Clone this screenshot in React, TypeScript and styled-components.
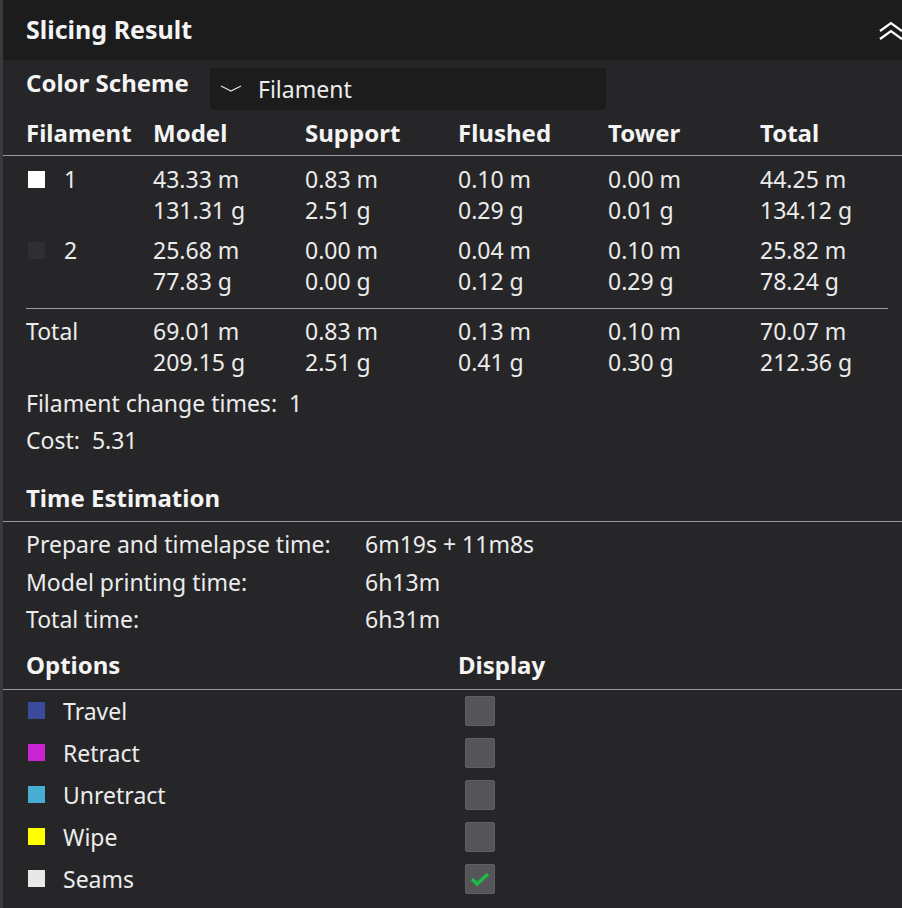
import React from "react";
import styled, { createGlobalStyle } from "styled-components";

const Global = createGlobalStyle`
  html, body { margin: 0; padding: 0; background: #262628; }
  body { font-family: "Noto Sans", "Open Sans", sans-serif; color: #ececec; }
  * { box-sizing: border-box; }
`;

const Panel = styled.div`
  width: 902px;
  height: 908px;
  background: #262628;
  border-left: 3px solid #3a3a3c;
  overflow: hidden;
  font-size: 23px;
`;

const TitleBar = styled.div`
  height: 60px;
  background: #1c1c1d;
  display: flex;
  align-items: center;
  justify-content: space-between;
  padding-left: 23px;
`;

const Title = styled.div`
  font-weight: 700;
  font-size: 25px;
  color: #f4f4f4;
  margin-top: -2px;
`;

const SchemeRow = styled.div`
  display: flex;
  align-items: flex-start;
  padding: 8px 0 0 23px;
  gap: 17px;
`;

const SectionLabel = styled.div`
  font-weight: 700;
  font-size: 24px;
  color: #f4f4f4;
`;

const SchemeLabel = styled(SectionLabel)`
  line-height: 30px;
  min-width: 167px;
  white-space: nowrap;
`;

const Dropdown = styled.div`
  width: 396px;
  height: 42px;
  background: #1c1c1d;
  border-radius: 3px;
  display: flex;
  align-items: center;
  padding-left: 10px;
  gap: 16px;
  font-size: 23px;
`;

const Table = styled.div`
  display: grid;
  grid-template-columns: 127px 152px 153px 150px 152px 1fr;
  padding-left: 23px;
`;

const HeadCell = styled.div`
  font-weight: 700;
  font-size: 24px;
  color: #f4f4f4;
  line-height: 38px;
  padding-top: 4px;
  padding-bottom: 3px;
  white-space: nowrap;
`;

const Rule = styled.div<{ $inset?: boolean }>`
  height: 1px;
  background: #9a9a9c;
  margin-left: ${(p) => (p.$inset ? "23px" : "0")};
  margin-right: ${(p) => (p.$inset ? "14px" : "0")};
`;

const Spacer = styled.div<{ $h: number }>`
  height: ${(p) => p.$h}px;
`;

const DataRow = styled.div<{ $top: number }>`
  display: grid;
  grid-template-columns: 127px 152px 153px 150px 152px 1fr;
  padding-left: 23px;
  padding-top: ${(p) => p.$top}px;
  line-height: 31px;
`;

const Cell = styled.div`
  white-space: nowrap;
`;

const FilCell = styled.div`
  display: flex;
  align-items: center;
  height: 31px;
  gap: 19px;
`;

const Swatch = styled.span<{ $c: string }>`
  display: inline-block;
  width: 17px;
  height: 17px;
  background: ${(p) => p.$c};
  margin-left: 2px;
  flex: none;
`;

const InfoLine = styled.div`
  padding-left: 23px;
  line-height: 37px;
  white-space: pre;
`;

const SectionHead = styled.div<{ $top: number }>`
  padding: ${(p) => p.$top}px 0 0 23px;
  line-height: 38px;
  display: grid;
  grid-template-columns: 432px 1fr;
`;

const TimeRow = styled.div`
  display: grid;
  grid-template-columns: 339px 1fr;
  padding-left: 23px;
  line-height: 37.5px;
`;

const OptRow = styled.div`
  display: grid;
  grid-template-columns: 432px 1fr;
  padding-left: 23px;
  height: 42px;
  align-items: center;
`;

const OptLabel = styled.div`
  display: flex;
  align-items: center;
  gap: 18px;
`;

const Check = styled.div`
  width: 30px;
  height: 30px;
  margin-left: 7px;
  background: #555557;
  border: 1px solid #606062;
  border-radius: 2px;
  display: flex;
  align-items: center;
  justify-content: center;
`;

const filaments = [
  {
    id: "1",
    color: "#ffffff",
    vals: [
      ["43.33 m", "131.31 g"],
      ["0.83 m", "2.51 g"],
      ["0.10 m", "0.29 g"],
      ["0.00 m", "0.01 g"],
      ["44.25 m", "134.12 g"],
    ],
  },
  {
    id: "2",
    color: "#2f2f31",
    vals: [
      ["25.68 m", "77.83 g"],
      ["0.00 m", "0.00 g"],
      ["0.04 m", "0.12 g"],
      ["0.10 m", "0.29 g"],
      ["25.82 m", "78.24 g"],
    ],
  },
];

const totals = [
  ["69.01 m", "209.15 g"],
  ["0.83 m", "2.51 g"],
  ["0.13 m", "0.41 g"],
  ["0.10 m", "0.30 g"],
  ["70.07 m", "212.36 g"],
];

const options = [
  { name: "Travel", color: "#3a4b9c", on: false },
  { name: "Retract", color: "#c824d2", on: false },
  { name: "Unretract", color: "#45aed2", on: false },
  { name: "Wipe", color: "#ffff00", on: false },
  { name: "Seams", color: "#e8e8e8", on: true },
];

const Vals = ({ v }: { v: string[] }) => (
  <Cell>
    {v[0]}
    <br />
    {v[1]}
  </Cell>
);

export default function App() {
  return (
    <>
      <Global />
      <Panel>
        <TitleBar>
          <Title>Slicing Result</Title>
          <svg width="26" height="22" viewBox="0 0 26 22" style={{ marginRight: -2, marginTop: 4 }}>
            <polyline points="2,10 13,2 24,10" fill="none" stroke="#fff" strokeWidth="2.2" />
            <polyline points="2,18 13,10 24,18" fill="none" stroke="#fff" strokeWidth="2.2" />
          </svg>
        </TitleBar>
        <SchemeRow>
          <SchemeLabel>Color Scheme</SchemeLabel>
          <Dropdown>
            <svg width="22" height="12" viewBox="0 0 22 12">
              <polyline points="1,3 11,8 21,3" fill="none" stroke="#e0e0e0" strokeWidth="1.2" />
            </svg>
            <span>Filament</span>
          </Dropdown>
        </SchemeRow>
        <Table>
          {["Filament", "Model", "Support", "Flushed", "Tower", "Total"].map((h) => (
            <HeadCell key={h}>{h}</HeadCell>
          ))}
        </Table>
        <Rule />
        {filaments.map((f, i) => (
          <DataRow key={f.id} $top={i === 0 ? 8 : 9}>
            <FilCell>
              <Swatch $c={f.color} />
              <span>{f.id}</span>
            </FilCell>
            {f.vals.map((v, j) => (
              <Vals key={j} v={v} />
            ))}
          </DataRow>
        ))}
        <Spacer $h={11} />
        <Rule $inset />
        <DataRow $top={7}>
          <Cell>Total</Cell>
          {totals.map((v, j) => (
            <Vals key={j} v={v} />
          ))}
        </DataRow>
        <Spacer $h={7} />
        <InfoLine>{"Filament change times:  1"}</InfoLine>
        <InfoLine>{"Cost:  5.31"}</InfoLine>
        <SectionHead $top={20}>
          <SectionLabel>Time Estimation</SectionLabel>
        </SectionHead>
        <Spacer $h={4} />
        <Rule />
        <Spacer $h={4} />
        <TimeRow>
          <span>Prepare and timelapse time:</span>
          <span>6m19s + 11m8s</span>
        </TimeRow>
        <TimeRow>
          <span>Model printing time:</span>
          <span>6h13m</span>
        </TimeRow>
        <TimeRow>
          <span>Total time:</span>
          <span>6h31m</span>
        </TimeRow>
        <SectionHead $top={7}>
          <SectionLabel>Options</SectionLabel>
          <SectionLabel>Display</SectionLabel>
        </SectionHead>
        <Spacer $h={5} />
        <Rule />
        {options.map((o) => (
          <OptRow key={o.name}>
            <OptLabel>
              <Swatch $c={o.color} />
              <span>{o.name}</span>
            </OptLabel>
            <Check>
              {o.on && (
                <svg width="20" height="16" viewBox="0 0 20 16">
                  <polyline points="2,8 7,13 18,3" fill="none" stroke="#1fb84a" strokeWidth="3.6" />
                </svg>
              )}
            </Check>
          </OptRow>
        ))}
      </Panel>
    </>
  );
}
